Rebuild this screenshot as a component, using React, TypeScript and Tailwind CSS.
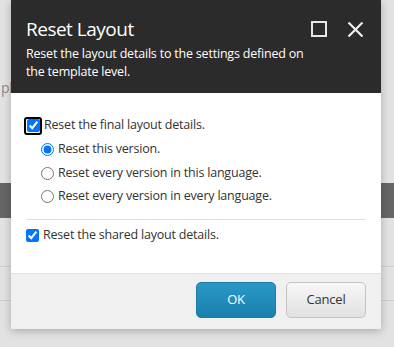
import React from "react";

const font = { fontFamily: '"Open Sans", "Noto Sans", sans-serif' };

function Radio({ checked, label }: { checked?: boolean; label: string }) {
  return (
    <label className="flex items-center gap-[4px] h-[23.5px]">
      <input
        type="radio"
        name="scope"
        defaultChecked={checked}
        className="m-0 w-[13px] h-[13px] accent-[#0075ff]"
      />
      <span>{label}</span>
    </label>
  );
}

export default function App() {
  return (
    <div
      className="relative w-[394px] h-[347px] overflow-hidden bg-[#e2e2e2] text-[12.5px] tracking-[-0.2px] text-[#333]"
      style={font}
    >
      {/* page behind the dialog */}
      <div className="flex flex-col">
        <div className="h-[80px]" />
        <div className="h-[16px] leading-[16px] text-[#8a8a8a] text-[14px] pl-px">pl</div>
        <div className="h-[87px]" />
        <div className="h-[35px] bg-[#666]" />
        <div className="h-[48px]" />
        <div className="h-px bg-[#cfcfcf]" />
        <div className="h-[33px]" />
        <div className="h-px bg-[#cfcfcf]" />
      </div>

      {/* dialog */}
      <div className="absolute left-[11px] top-0 w-[370px] flex flex-col shadow-[0_2px_8px_rgba(0,0,0,0.25)]">
        <div className="h-[93px] bg-[#2b2b2b] text-white px-[15px] pt-[16px]">
          <div className="flex items-center justify-between">
            <div className="text-[19px]/[26px] tracking-[-0.5px]">Reset Layout</div>
            <div className="flex items-center gap-[20px] mr-[2px]">
              <div className="w-[16px] h-[16px] border-[2px] border-[#e8e8e8]" />
              <svg width="17" height="17" viewBox="0 0 17 17">
                <path d="M1.5 1.5 L15.5 15.5 M15.5 1.5 L1.5 15.5" stroke="#f0f0f0" strokeWidth="2.2" />
              </svg>
            </div>
          </div>
          <p className="mt-[3px] text-[12.5px]/[18px] w-[280px]">
            Reset the layout details to the settings defined on the template level.
          </p>
        </div>

        <div className="h-[180px] bg-white px-[15px] pt-[23px]">
          <label className="flex items-center gap-[4px] h-[19px]">
            <span className="flex items-center justify-center w-[18px] h-[18px] -ml-[2px] -mr-[2px] rounded-[3px] border-[2px] border-black">
              <input
                type="checkbox"
                defaultChecked
                className="m-0 w-[13px] h-[13px] accent-[#0075ff]"
              />
            </span>
            <span>Reset the final layout details.</span>
          </label>
          <div className="pl-[15px] pt-[3px] flex flex-col">
            <Radio checked label="Reset this version." />
            <Radio label="Reset every version in this language." />
            <Radio label="Reset every version in every language." />
          </div>
          <div className="h-px bg-[#dedede] mt-[10px]" />
          <label className="flex items-center gap-[4px] h-[19px] mt-[6px]">
            <input
              type="checkbox"
              defaultChecked
              className="m-0 w-[13px] h-[13px] accent-[#0075ff]"
            />
            <span>Reset the shared layout details.</span>
          </label>
        </div>

        <div className="h-[56px] bg-[#f0f0f0] border-t border-[#e4e4e4] flex items-start justify-end gap-[10px] px-[15px] pt-[8px]">
          <button className="w-[80px] h-[36px] rounded-[5px] text-white text-[13px] bg-gradient-to-b from-[#2898c6] to-[#1c80ad] border border-[#1d7aa5]">
            OK
          </button>
          <button className="w-[80px] h-[36px] rounded-[5px] text-[#333] text-[13px] bg-gradient-to-b from-[#f7f7f7] to-[#e1e1e1] border border-[#c4c4c4]">
            Cancel
          </button>
        </div>
      </div>
    </div>
  );
}
